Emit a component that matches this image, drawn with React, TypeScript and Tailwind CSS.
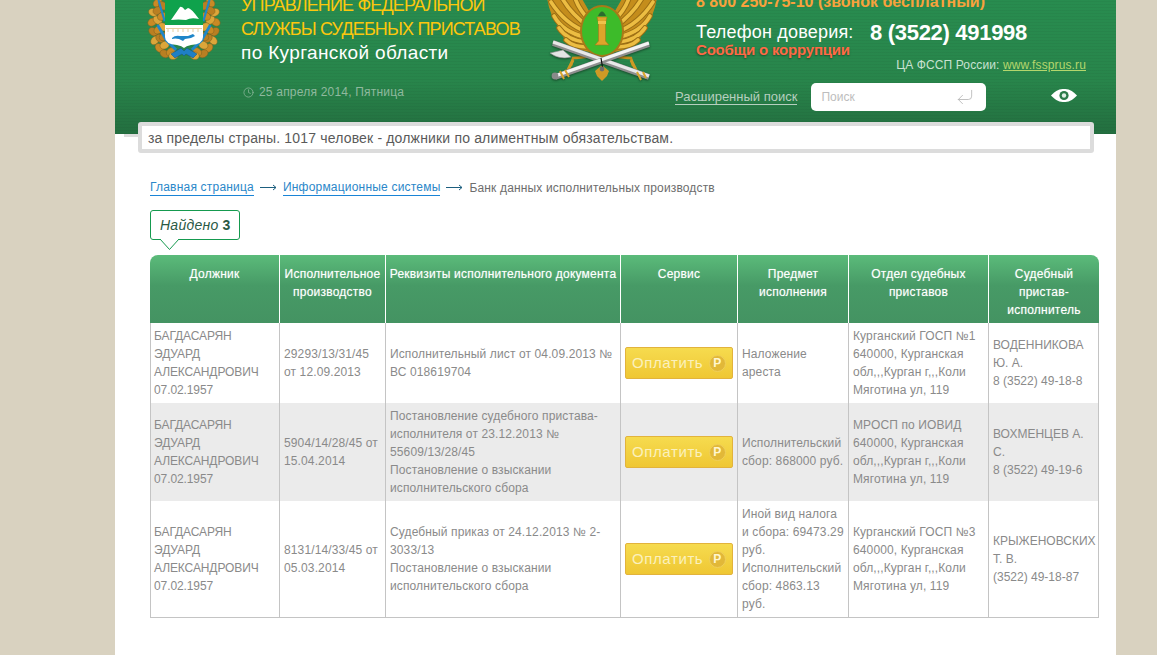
import { Clock, CornerDownLeft } from "lucide-react";

type Row = {
  debtor: string[];
  proceeding: string;
  document: string[];
  subject: string[];
  department: string[];
  bailiff: string[];
  bg: string;
  height: string;
};

const rows: Row[] = [
  {
    debtor: ["БАГДАСАРЯН", "ЭДУАРД", "АЛЕКСАНДРОВИЧ", "07.02.1957"],
    proceeding: "29293/13/31/45 от 12.09.2013",
    document: ["Исполнительный лист от 04.09.2013 № ВС 018619704"],
    subject: ["Наложение ареста"],
    department: ["Курганский ГОСП №1", "640000, Курганская обл,,,Курган г,,,Коли Мяготина ул, 119"],
    bailiff: ["ВОДЕННИКОВА Ю. А.", "8 (3522) 49-18-8"],
    bg: "bg-white",
    height: "h-[80px]",
  },
  {
    debtor: ["БАГДАСАРЯН", "ЭДУАРД", "АЛЕКСАНДРОВИЧ", "07.02.1957"],
    proceeding: "5904/14/28/45 от 15.04.2014",
    document: [
      "Постановление судебного пристава-исполнителя от 23.12.2013 № 55609/13/28/45",
      "Постановление о взыскании исполнительского сбора",
    ],
    subject: ["Исполнительский сбор: 868000 руб."],
    department: ["МРОСП по ИОВИД", "640000, Курганская обл,,,Курган г,,,Коли Мяготина ул, 119"],
    bailiff: ["ВОХМЕНЦЕВ А. С.", "8 (3522) 49-19-6"],
    bg: "bg-[#ebebeb]",
    height: "h-[98px]",
  },
  {
    debtor: ["БАГДАСАРЯН", "ЭДУАРД", "АЛЕКСАНДРОВИЧ", "07.02.1957"],
    proceeding: "8131/14/33/45 от 05.03.2014",
    document: ["Судебный приказ от 24.12.2013 № 2-3033/13", "Постановление о взыскании исполнительского сбора"],
    subject: ["Иной вид налога и сбора: 69473.29 руб.", "Исполнительский сбор: 4863.13 руб."],
    department: ["Курганский ГОСП №3", "640000, Курганская обл,,,Курган г,,,Коли Мяготина ул, 119"],
    bailiff: ["КРЫЖЕНОВСКИХ Т. В.", "(3522) 49-18-87"],
    bg: "bg-white",
    height: "h-[117px]",
  },
];

const heads = [
  { label: "Должник", width: "w-[129px]" },
  { label: "Исполнительное производство", width: "w-[106px]" },
  { label: "Реквизиты исполнительного документа", width: "w-[235px]" },
  { label: "Сервис", width: "w-[117px]" },
  { label: "Предмет исполнения", width: "w-[111px]" },
  { label: "Отдел судебных приставов", width: "w-[140px]" },
  { label: "Судебный пристав-исполнитель", width: "w-[111px]" },
];

function RegionArms() {
  const left = [
    [14, 3, -30], [9, 13, 20], [14, 11, -20], [8, 23, -25], [14, 21, 30], [9, 33, 30], [15, 31, -30],
    [11, 42, -40], [17, 40, 30], [16, 50, 40], [22, 47, -20], [22, 56, 20], [29, 54, -30], [32, 58, -10],
    [20, 6, 30], [19, 17, -20], [20, 28, 30], [21, 38, -30],
  ];
  return (
    <svg width="100" height="70" viewBox="0 0 100 70" className="shrink-0">
      {[0, 1].map((side) => (
        <g key={side} transform={side ? "matrix(-0.88 0 0 0.96 82.7 0)" : "matrix(0.88 0 0 0.96 5.28 0)"}>
          {left.map(([x, y, r], i) => (
            <ellipse key={i} cx={x} cy={y} rx="5.4" ry="4" fill={i % 3 === 0 ? "#c98a25" : i % 3 === 1 ? "#dca63a" : "#b97f22"} stroke="#7e6120" strokeWidth="0.5" transform={`rotate(${r} ${x} ${y})`} />
          ))}
          <path d="M15 0 L22 22" stroke="#1f86c9" strokeWidth="2.4" fill="none" />
          <path d="M14 26 L24 42 L35 52" stroke="#1f86c9" strokeWidth="3.2" fill="none" />
        </g>
      ))}
      <path d="M31 54 L41 48 L44 51 L47 48 L57 54 L53 58 L46 54 L44 56 L42 54 L35 58 Z" fill="#1f7fc4" stroke="#14507f" strokeWidth="0.5" />
      <path d="M25 -2 H63 V37 Q63 44 51 45 Q46 46 44 48 Q42 46 37 45 Q25 44 25 37 Z" fill="#fff" />
      <path d="M25 -2 H63 V25 H25 Z" fill="#0fa24c" />
      <path d="M31 20 L40 7 Q42 6 45 10 L48 8 Q51 8 59 19 Q51 17 46 20 Q38 19 31 20 Z" fill="#fff" />
      <path d="M26 28.5 H62 M28 29 V32 M33 29 V32 M38 29 V32 M43 29 V32 M48 29 V32 M53 29 V32 M58 29 V32" stroke="#e6cfa0" strokeWidth="1" fill="none" />
      <path d="M32 38 Q35 35 40 36 L48 36 L53 34 L55 36 L51 38 L45 39 L43 41 L39 39 Q35 38 32 39 Z" fill="#1f86c9" />
    </svg>
  );
}

function BailiffEmblem() {
  const feathers = [
    "M56 22 Q44 10 40 -2",
    "M54 27 Q36 14 27 -2",
    "M52 32 Q30 24 16 2",
    "M50 37 Q28 32 19 16",
    "M50 42 Q32 40 24 28",
    "M52 47 Q38 47 31 40",
  ];
  const wing = (
    <g>
      <path d="M58 18 L46 -3 L12 -3 Q14 14 24 28 Q28 40 38 48 L54 52 Z" fill="#c48d1c" />
      {feathers.map((d) => (
        <g key={d}>
          <path d={d} stroke="#9a6d14" strokeWidth="5.6" fill="none" strokeLinecap="round" />
          <path d={d} stroke="#ecbd42" strokeWidth="3.6" fill="none" strokeLinecap="round" />
        </g>
      ))}
      <path d="M56 56 Q44 58 38 58 L36 66" stroke="#c48d1c" strokeWidth="2.4" fill="none" />
    </g>
  );
  return (
    <svg width="130" height="90" viewBox="0 0 130 90" className="shrink-0">
      {wing}
      <g transform="matrix(-1 0 0 1 134 0)">{wing}</g>
      <ellipse cx="67" cy="31" rx="22" ry="26" fill="#a87a18" />
      <ellipse cx="67" cy="31" rx="20" ry="24" fill="#3dbb2a" />
      <path d="M62 17 H72 L70.5 23 V41 L74 45 H60 L63.5 41 V23 Z" fill="#dda52a" stroke="#a8761a" strokeWidth="0.6" />
      <path d="M63 21 H71 V24 H63 Z" fill="#f0c24a" />
      <path d="M63 16 Q67 7 71 16 Z" fill="#2b6b2e" />
      <path d="M66 66 L60 71 L62 76 L67 81 L72 76 L74 71 L68 66 Z" fill="#cf9a25" />
      <path d="M38 60 L32 72 M96 60 L102 72" stroke="#cf9a25" strokeWidth="3" />
      <g filter="drop-shadow(0 1px 1px rgba(0,0,0,.45))">
        <line x1="18" y1="43" x2="114" y2="77" stroke="#8e8e8e" strokeWidth="5.6" />
        <line x1="18" y1="42" x2="114" y2="76" stroke="#e8e8e8" strokeWidth="3.2" />
        <path d="M15 53 L28 50 L36 57 Q24 60 15 53 Z" fill="#e4e4e4" stroke="#8e8e8e" strokeWidth="0.6" />
        <line x1="20" y1="77" x2="114" y2="44" stroke="#8e8e8e" strokeWidth="5.6" />
        <line x1="20" y1="76" x2="114" y2="43" stroke="#f4f4f4" strokeWidth="3.2" />
        <path d="M25 71 L29 79 M30 70 L34 77 M102 72 L106 80 M108 72 L111 78" stroke="#d9a52c" strokeWidth="2" />
        <circle cx="20" cy="76" r="3.4" fill="#8a8a8a" />
      </g>
      <path d="M66 58 L67.5 67" stroke="#111" strokeWidth="1.2" />
      <circle cx="67" cy="69" r="2.4" fill="#6d6d6d" />
    </svg>
  );
}

function Eye() {
  return (
    <svg width="26" height="13" viewBox="0 0 26 13" className="shrink-0">
      <path d="M0 6.5 C5 1 9 0 13 0 C17 0 21 1 26 6.5 C21 12 17 13 13 13 C9 13 5 12 0 6.5 Z" fill="#fff" />
      <circle cx="13" cy="6.5" r="4.6" fill="#2b7a48" />
      <circle cx="13" cy="6.5" r="2.2" fill="#dfeee4" />
    </svg>
  );
}

function Arrow() {
  return (
    <svg width="17" height="7" viewBox="0 0 17 7" className="mx-[6px] shrink-0">
      <path d="M0 3.5 H16 M13 1 L16 3.5 L13 6" stroke="#1d5f7f" strokeWidth="1" fill="none" />
    </svg>
  );
}

function PayButton() {
  return (
    <button className="flex h-[32px] w-[108px] items-center justify-between rounded-[2px] border border-[#e2b33c] bg-gradient-to-b from-[#f6db4e] to-[#efc733] px-[6px] text-[15px] tracking-[0.6px] text-[#fbf1bd]">
      <span>Оплатить</span>
      <span className="flex h-[17px] w-[17px] items-center justify-center rounded-full border border-[#f0d05a] bg-[#e2b838] text-[12px] font-bold leading-none text-[#fff6cf]">Р</span>
    </button>
  );
}

export default function App() {
  const cell = "border-l border-[#c4c4c4] px-[4px] align-middle";
  return (
    <div className="min-h-screen bg-[#d9d2c0] font-['Liberation_Sans',Arial,sans-serif]">
      <div className="relative ml-[115px] min-h-[655px] w-[1001px] bg-white">
        {/* Header */}
        <header className="flex h-[134px] overflow-hidden bg-[repeating-linear-gradient(0deg,rgba(0,0,0,.035)_0_1px,transparent_1px_3px),linear-gradient(to_bottom,#288c4f,#28854b_60%,#236e3f)]">
          <div className="ml-[25px] w-[101px]">
            <RegionArms />
          </div>

          <div className="-mt-[7px] w-[304px] shrink-0">
            <div className="text-[18px] leading-[24px] tracking-[-0.85px] text-[#fdc70d]">
              <div className="whitespace-nowrap">УПРАВЛЕНИЕ ФЕДЕРАЛЬНОЙ</div>
              <div className="whitespace-nowrap">СЛУЖБЫ СУДЕБНЫХ ПРИСТАВОВ</div>
            </div>
            <div className="text-[19px] leading-[24px] tracking-[0.35px] text-white">по Курганской области</div>
            <div className="mt-[18px] flex items-center gap-[5px] pl-[2px] text-[12px] tracking-[0.2px] text-[#8fb99e]">
              <Clock size={11} strokeWidth={1.6} />
              <span>25 апреля 2014, Пятница</span>
            </div>
          </div>

          <div className="-ml-[10px] w-[131px]">
            <BailiffEmblem />
          </div>

          <div className="w-[440px] shrink-0">
            <div className="-mt-[7px] ml-[30px] text-[16px] font-bold leading-[17px] tracking-[0px] text-[#f9a23c]">8 800 250-75-10 (звонок бесплатный)</div>
            <div className="ml-[30px] mt-[11px] flex items-start">
              <div className="w-[174px]">
                <div className="text-[18px] leading-[22px] tracking-[0.2px] text-white">Телефон доверия:</div>
                <div className="-mt-[2px] text-[15px] font-bold leading-[18px] tracking-[-0.2px] text-[#ff6a45] [text-shadow:0_1px_2px_rgba(0,0,0,.4)]">Сообщи о коррупции</div>
              </div>
              <div className="text-[22px] font-bold leading-[24px] tracking-[-0.3px] text-white">8 (3522) 491998</div>
            </div>
            <div className="mr-[20px] -mt-[2px] text-right text-[12px] leading-[16px] tracking-[0.12px] text-[#c9e2d2]">
              ЦА ФССП России: <span className="text-[#b4d66c] underline">www.fssprus.ru</span>
            </div>
            <div className="mt-[10px] flex items-center">
              <span className="ml-[9px] border-b border-[#b6cfbf] text-[13px] leading-[15px] text-[#b6cfbf]">Расширенный поиск</span>
              <div className="ml-[14px] flex h-[28px] w-[175px] items-center justify-between rounded-[5px] bg-white px-[10px] pr-[11px] text-[12px] text-[#bdbdbd]">
                <span>Поиск</span>
                <CornerDownLeft size={20} strokeWidth={1} className="text-[#b5b5b5]" />
              </div>
              <div className="-mt-[3px] ml-[65px]">
                <Eye />
              </div>
            </div>
          </div>
        </header>
        <div className="absolute left-[9px] top-[134px] h-[3px] w-[14px] bg-[#dcdcdc]" />

        {/* News ticker */}
        <div className="relative z-10 -mt-[12px] ml-[23px] flex h-[31px] w-[956px] items-center rounded-[3px] border-[4px] border-[#dcdcdc] bg-white pl-[6px] pt-[1px] text-[14px] tracking-[0.17px] text-[#5a5a5a]">
          за пределы страны. 1017 человек - должники по алиментным обязательствам.
        </div>

        {/* Breadcrumbs */}
        <div className="ml-[35px] mt-[26px] flex items-center text-[12px] leading-[16px] tracking-[0.2px]">
          <span className="border-b border-[#1a84d6] text-[#2a87c9]">Главная страница</span>
          <Arrow />
          <span className="border-b border-[#1a84d6] text-[#2a87c9]">Информационные системы</span>
          <Arrow />
          <span className="tracking-[0.15px] text-[#6d6d6d]">Банк данных исполнительных производств</span>
        </div>

        {/* Found badge */}
        <div className="relative ml-[35px] mt-[14px] flex h-[30px] w-[90px] items-center rounded-[3px] border border-[#159a4f] bg-white pl-[9px] text-[14px] tracking-[0.25px] text-[#2b5a45]">
          <i>Найдено</i>&nbsp;<b>3</b>
          <svg width="22" height="12" viewBox="0 0 22 12" className="absolute left-[8px] top-[28px]">
            <path d="M1 0 L10.5 10.5 L20 0" fill="#fff" stroke="#159a4f" strokeWidth="1" />
          </svg>
        </div>

        {/* Results table */}
        <table className="ml-[35px] mt-[15px] w-[949px] table-fixed border-separate border-spacing-0 text-[12px] leading-[18px] tracking-[0.12px] text-[#8a8a8a]">
          <thead>
            <tr className="h-[68px]">
              {heads.map((head, i) => (
                <th
                  key={head.label}
                  className={`${head.width} border-l border-white bg-gradient-to-b from-[#5bbb7a] via-[#479a66] via-45% to-[#449362] px-[1px] pt-[10px] align-top text-[12px] font-normal leading-[18px] tracking-[0.22px] text-white [text-shadow:0_0_1px_rgba(255,255,255,.5)] ${i === 0 ? "rounded-tl-[8px] border-l-0" : ""} ${i === 6 ? "rounded-tr-[8px]" : ""}`}
                >
                  {head.label}
                </th>
              ))}
            </tr>
          </thead>
          <tbody>
            {rows.map((row, i) => {
              const bottom = i === rows.length - 1 ? "border-b" : "";
              return (
                <tr key={i} className={`${row.bg} ${row.height}`}>
                  <td className={`border-l border-[#c4c4c4] pl-[3px] pr-[4px] align-middle ${bottom} tracking-[-0.1px]`}>
                    {row.debtor.map((line) => (
                      <div key={line}>{line}</div>
                    ))}
                  </td>
                  <td className={`${cell} ${bottom}`}>{row.proceeding}</td>
                  <td className={`${cell} ${bottom}`}>
                    {row.document.map((line) => (
                      <div key={line}>{line}</div>
                    ))}
                  </td>
                  <td className={`${cell} ${bottom}`}>
                    <PayButton />
                  </td>
                  <td className={`${cell} ${bottom}`}>
                    {row.subject.map((line) => (
                      <div key={line}>{line}</div>
                    ))}
                  </td>
                  <td className={`${cell} ${bottom}`}>
                    {row.department.map((line) => (
                      <div key={line}>{line}</div>
                    ))}
                  </td>
                  <td className={`${cell} ${bottom} border-r tracking-[0px]`}>
                    {row.bailiff.map((line) => (
                      <div key={line}>{line}</div>
                    ))}
                  </td>
                </tr>
              );
            })}
          </tbody>
        </table>
      </div>
    </div>
  );
}
